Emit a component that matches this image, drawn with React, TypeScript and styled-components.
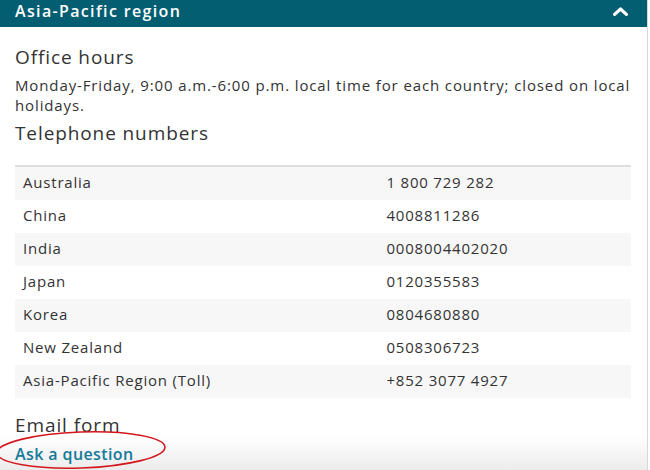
import React from 'react';
import styled, { createGlobalStyle } from 'styled-components';

const GlobalStyle = createGlobalStyle`
  html, body {
    margin: 0;
    padding: 0;
    background: #ffffff;
  }
  body {
    font-family: 'Open Sans', 'Liberation Sans', Arial, sans-serif;
    color: #333333;
  }
`;

const Panel = styled.div`
  width: 647px;
  height: 470px;
  overflow: hidden;
  border-right: 1px solid #d8d8d8;
  background: linear-gradient(to bottom, #ffffff calc(100% - 34px), #ececec 100%);
`;

const Header = styled.div`
  height: 27px;
  background: #045e72;
  color: #ffffff;
  display: flex;
  align-items: flex-start;
  justify-content: space-between;
  padding: 0 19px 0 15px;
  box-sizing: border-box;
`;

const HeaderTitle = styled.span`
  font-size: 16px;
  font-weight: 600;
  letter-spacing: 1.35px;
  line-height: 23px;
`;

const Chevron = styled.svg`
  margin-top: 7px;
`;

const Body = styled.div`
  padding: 18px 16px 0 15px;
`;

const Heading = styled.h3<{ gap?: number }>`
  margin: 0 0 ${({ gap }) => gap ?? 7}px;
  font-size: 19px;
  font-weight: 400;
  letter-spacing: 0.9px;
  line-height: 24px;
  color: #333333;
`;

const Paragraph = styled.p`
  margin: 0 0 6px;
  font-size: 15px;
  letter-spacing: 0.88px;
  line-height: 19.5px;
`;

const Table = styled.table`
  width: 100%;
  border-collapse: collapse;
  border-top: 2px solid #dddddd;
  font-size: 15px;
  letter-spacing: 0.8px;
  margin-bottom: 15px;
`;

const Row = styled.tr<{ striped?: boolean }>`
  background: ${({ striped }) => (striped ? '#f7f7f7' : '#ffffff')};
  & + & td {
    border-top: 1px solid #e3e3e3;
  }
`;

const Cell = styled.td<{ wide?: boolean }>`
  height: 30px;
  padding: 0 8px 3px;
  width: ${({ wide }) => (wide ? '59%' : 'auto')};
  vertical-align: middle;
  line-height: 20px;
`;

const LinkWrap = styled.div`
  position: relative;
  margin-top: 6px;
`;

const Link = styled.a`
  font-size: 16px;
  font-weight: 600;
  letter-spacing: 0.4px;
  line-height: 20px;
  color: #16799a;
  text-decoration: none;
`;

const Circle = styled.svg`
  position: absolute;
  left: -15px;
  top: -14px;
  pointer-events: none;
`;

const phones = [
  ['Australia', '1 800 729 282'],
  ['China', '4008811286'],
  ['India', '0008004402020'],
  ['Japan', '0120355583'],
  ['Korea', '0804680880'],
  ['New Zealand', '0508306723'],
  ['Asia-Pacific Region (Toll)', '+852 3077 4927'],
];

const App: React.FC = () => (
  <>
    <GlobalStyle />
    <Panel>
      <Header>
        <HeaderTitle>Asia-Pacific region</HeaderTitle>
        <Chevron width="15" height="9" viewBox="0 0 15 9">
          <polyline
            points="1.6,7.4 7.5,2 13.4,7.4"
            fill="none"
            stroke="#ffffff"
            strokeWidth="3.2"
            strokeLinecap="round"
            strokeLinejoin="round"
          />
        </Chevron>
      </Header>
      <Body>
        <Heading>Office hours</Heading>
        <Paragraph>
          Monday-Friday, 9:00 a.m.-6:00 p.m. local time for each country; closed on local holidays.
        </Paragraph>
        <Heading gap={20}>Telephone numbers</Heading>
        <Table>
          <tbody>
            {phones.map(([country, number], ind) => (
              <Row key={country} striped={ind % 2 === 0}>
                <Cell wide>{country}</Cell>
                <Cell>{number}</Cell>
              </Row>
            ))}
          </tbody>
        </Table>
        <Heading gap={0}>Email form</Heading>
        <LinkWrap>
          <Link href="#">Ask a question</Link>
          <Circle width="190" height="46" viewBox="0 0 190 46">
            <ellipse
              cx="81"
              cy="21"
              rx="84"
              ry="18"
              fill="none"
              stroke="#d4161c"
              strokeWidth="1.6"
              transform="rotate(-2 81 21)"
            />
          </Circle>
        </LinkWrap>
      </Body>
    </Panel>
  </>
);

export default App;
